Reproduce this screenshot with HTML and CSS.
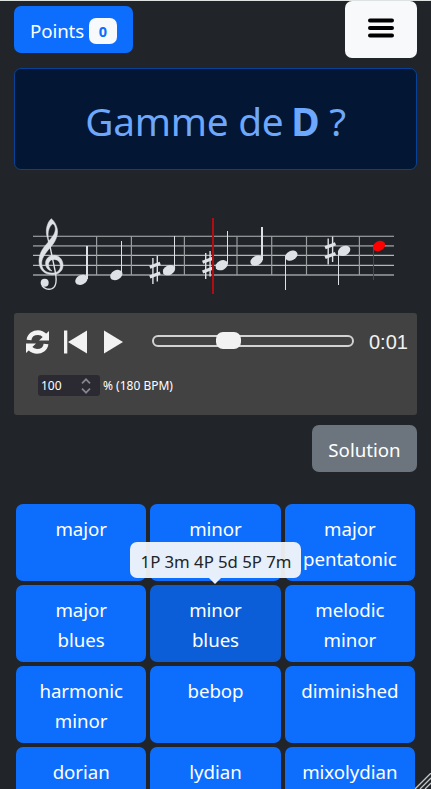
FILE: index.html
```
<!DOCTYPE html>
<html lang="fr">
<head>
<meta charset="utf-8">
<title>Gammes</title>
<link rel="stylesheet" href="styles.css">
</head>
<body>
<main class="app">
  <header class="topbar">
    <button class="btn points"><span class="points-label">Points</span><span class="badge">0</span></button>
    <button class="menu" aria-label="Menu">
      <svg width="26" height="20" viewBox="0 0 26 20"><path d="M2 2.5h22M2 10h22M2 17.5h22" stroke="#000" stroke-width="4" stroke-linecap="round"/></svg>
    </button>
  </header>

  <section class="question"><h1>Gamme de <b>D</b> ?</h1></section>

  <svg class="score" width="403" height="90" viewBox="14 210 403 90">
    <defs>
      <ellipse id="head" rx="6.5" ry="4.7" transform="rotate(-27)"/>
      <g id="sharp">
        <path d="M-2.1-12V14M2.3-14V11.5" stroke-width="1.4"/>
        <path d="M-5.2-2.8 5.2-6.8M-5.2 7 5.2 3" stroke-width="3.3"/>
      </g>
    </defs>
    <g stroke="#b3b6b9" fill="none">
      <path d="M33 236.3H394M33 255.4H394M33 265.4H394" stroke-width="1.1"/>
      <path d="M33 245.9H394M33 275H394" stroke="#7c8084" stroke-width="1.9"/>
      <path d="M96.6 236V275M131.4 236V275M184.4 236V275M237 236V275M271.7 236V275M306.5 236V275M359.4 236V275" stroke="#999da0" stroke-width="1.2"/>
    </g>
    <g transform="translate(34 214) scale(.33333)">
      <path fill="#dee2e6" stroke="#dee2e6" stroke-width="1.5" d="M52 14C42 22 34 43 38 63L43 84C28 101 15 116 15 142C15 168 32 182 55 182C75 182 89 169 87 150C85 131 68 119 51 125C31 132 29 157 46 169L54 171C41 160 40 144 52 138C66 132 79 142 79 155C79 169 70 177 55 177C36 178 22 166 23 146C24 128 40 111 56 92C70 73 74 54 68 38C64 26 57 18 52 14ZM59 31C67 40 65 54 56 67L45 81C39 62 43 39 55 30Z"/>
      <path d="M44 78 63 169C69 198 69 218 54 224C43 228 30 225 24 215" fill="none" stroke="#dee2e6" stroke-width="4.2"/>
      <circle cx="32" cy="206" r="12" fill="#dee2e6"/>
    </g>
    <g stroke="#dee2e6" fill="none">
      <path d="M87 279V246M262 260V227" stroke-width="2"/>
      <path d="M121.5 274V241M174.5 269V236M227.5 264V231M285.5 256V290M338.5 251V285" stroke-width="1"/>
      <use href="#sharp" x="155" y="270"/><use href="#sharp" x="207.8" y="265"/><use href="#sharp" x="330.3" y="250.5"/>
    </g>
    <g fill="#dee2e6">
      <use href="#head" x="81.4" y="279.8"/><use href="#head" x="116.3" y="275"/><use href="#head" x="169" y="270.2"/><use href="#head" x="221.7" y="265.2"/><use href="#head" x="256.6" y="260.6"/><use href="#head" x="291.3" y="255.6"/><use href="#head" x="344.1" y="250.8"/>
    </g>
    <path d="M373.5 246V280" stroke="#d80909"/>
    <use href="#head" x="379" y="246" fill="#f00"/>
    <path d="M213 218V294" stroke="#b30c10" stroke-width="2"/>
  </svg>

  <section class="player">
    <div class="transport">
      <svg class="icon loop" width="23" height="24" viewBox="0 0 23 24"><path d="M3 10C3.5 5 8 2.6 12 2.6C15 2.6 17 3.7 19 5.7M20 14C19.5 19 15 21.4 11 21.4C8 21.4 6 20.3 4 18.3" fill="none" stroke="#f2f2f2" stroke-width="4.8"/><path fill="#f2f2f2" d="M23 1V10.5H13ZM0 23V13.5H10Z"/></svg>
      <svg class="icon prev" width="23" height="24" viewBox="0 0 23 24"><path fill="#f2f2f2" d="M0 .5H3.3V23.5H0ZM23 .5V23.5L4 12Z"/></svg>
      <svg class="icon play" width="19" height="24" viewBox="0 0 19 24"><path fill="#f2f2f2" d="M0 .5 19 12 0 23.5Z"/></svg>
      <div class="track"><div class="thumb"></div></div>
      <span class="clock">0:01</span>
    </div>
    <div class="tempo">
      <div class="tempo-input"><span>100</span><svg width="10" height="16" viewBox="0 0 10 16"><path d="M1 5.3 5 1.3 9 5.3M1 10.7 5 14.7 9 10.7" fill="none" stroke="#86858e" stroke-width="1.7"/></svg></div>
      <span class="bpm">% (180 BPM)</span>
    </div>
  </section>

  <div class="actions"><button class="btn solution">Solution</button></div>

  <section class="scales">
    <button class="scale">major</button>
    <button class="scale">minor</button>
    <button class="scale">major<br>pentatonic</button>
    <button class="scale">major<br>blues</button>
    <button class="scale active">minor<br>blues<span class="tooltip">1P 3m 4P 5d 5P 7m</span></button>
    <button class="scale">melodic<br>minor</button>
    <button class="scale">harmonic<br>minor</button>
    <button class="scale">bebop</button>
    <button class="scale">diminished</button>
    <button class="scale">dorian</button>
    <button class="scale">lydian</button>
    <button class="scale">mixolydian</button>
  </section>
</main>
<svg class="grip" width="16" height="16" viewBox="0 0 16 16"><path d="M0 16 16 0M5 16 16 5M10 16 16 10" stroke="#c4c6c7" stroke-width="1.3"/></svg>
</body>
</html>
```
FILE: styles.css
```
* { box-sizing: border-box; }
html, body { height: 100%; }
body {
  margin: 0;
  overflow: hidden;
  background: #212529;
  color: #fff;
  font: 18.7px/30px "Noto Sans", "Open Sans", sans-serif;
}
.app { height: 789px; overflow: hidden; padding: 0 14px; border-top: 1px solid #dee2e0; }
button { font: inherit; color: #fff; border: 0; margin: 0; padding: 0; }
.topbar { display: flex; justify-content: space-between; align-items: flex-start; height: 67px; }
.btn { height: 47px; border-radius: 7px; }
.points { display: flex; align-items: center; width: 119px; margin-top: 5px; padding-left: 16px; background: #0d6efd; }
.points-label { width: 59px; text-align: left; white-space: nowrap; letter-spacing: -.1px; padding-top: 2px; }
.badge { width: 28px; height: 26px; border-radius: 7px; background: #f8f9fa; color: #0d6efd; font-size: 14.5px; font-weight: 700; line-height: 27px; margin-top: 3px; }
.menu { display: flex; justify-content: center; align-items: flex-start; width: 72px; height: 57px; padding-top: 17px; border-radius: 7px; background: #f8f9fa; }
.question { height: 102px; border: 1px solid #084298; border-radius: 7px; background: #031633; color: #6ea8fe; text-align: center; }
h1 { margin: 0; padding-top: 28px; font-size: 38.8px; line-height: 48px; font-weight: 400; letter-spacing: -.25px; }
h1 b { margin-left: -2px; }
.score { display: block; margin-top: 40px; }
.player { height: 102px; margin-top: 13px; border-radius: 3px; background: #424242; }
.transport { display: flex; align-items: center; height: 54px; padding: 4px 8px 0 12px; }
.icon { flex: none; }
.prev { margin-left: 15px; }
.play { margin-left: 17px; }
.track { flex: none; display: flex; align-items: center; width: 202px; height: 12px; margin: -3px 0 0 29px; padding-left: 62px; border: 2px solid #d2d2d2; border-radius: 6px; }
.thumb { flex: none; width: 25px; height: 17px; border-radius: 7px; background: #f2f2f2; }
.clock { margin-left: 15px; margin-top: -1px; font: 20px/30px "Liberation Sans", sans-serif; color: #f2f2f2; }
.tempo { display: flex; align-items: center; margin: 8px 0 0 24px; font-size: 12px; line-height: 21px; }
.tempo-input { display: flex; align-items: center; justify-content: space-between; width: 62px; height: 21px; padding: 0 9px 0 3px; border-radius: 3px; background: #2b2a33; }
.bpm { margin-left: 3px; white-space: nowrap; }
.actions { display: flex; justify-content: flex-end; margin-top: 10px; }
.solution { width: 105px; background: #6c757d; padding-top: 3px; }
.scales { display: grid; grid-template-columns: repeat(3, 1fr); grid-auto-rows: 77px; gap: 4px; margin: 32px 2px 0; }
.scale { position: relative; display: flex; justify-content: center; align-items: flex-start; height: 77px; padding: 10px 0 7px; border-radius: 7px; background: #0d6efd; text-align: center; letter-spacing: -.05px; }
.active { background: #0b5ed7; z-index: 1; }
.tooltip { position: absolute; left: 50%; top: -43px; width: 171px; height: 36px; margin-left: -85px; border-radius: 7px; background: rgba(248, 249, 250, .93); color: #212529; font-size: 16.8px; line-height: 39px; white-space: nowrap; }
.tooltip::after { content: ""; position: absolute; left: 79px; top: 36px; border: 6.5px solid transparent; border-bottom: 0; border-top-color: #e7f0fe; }
.grip { position: absolute; right: 0; bottom: 0; }
```
